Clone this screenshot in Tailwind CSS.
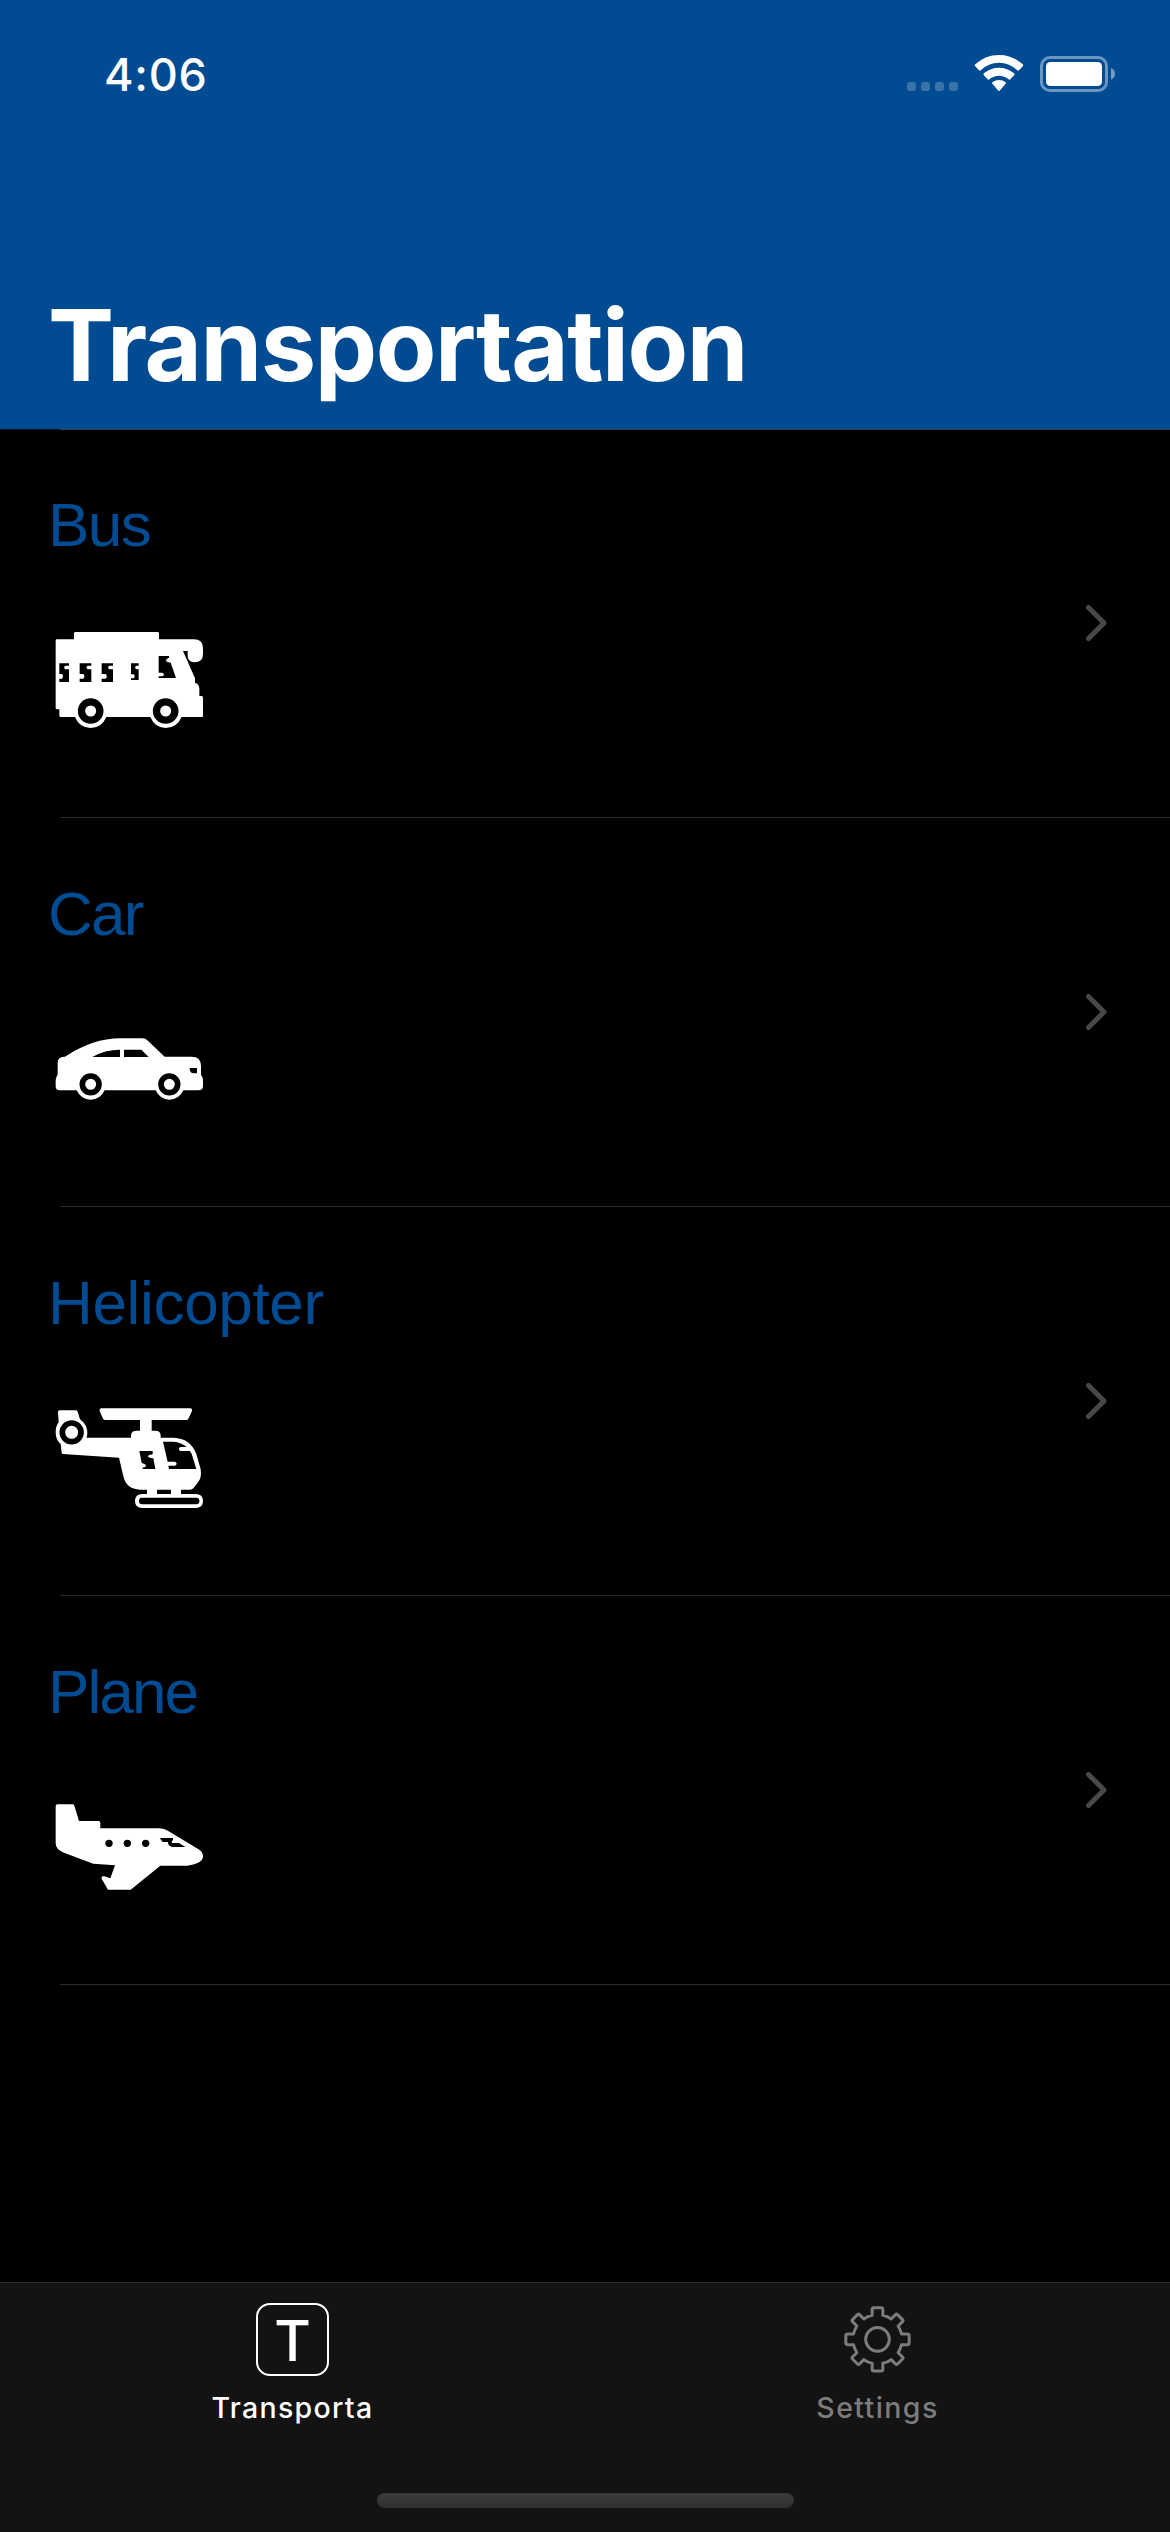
<!DOCTYPE html>
<html lang="en">
<head>
<meta charset="utf-8">
<title>Transportation</title>
<script src="https://cdn.jsdelivr.net/npm/@tailwindcss/browser@4"></script>
</head>
<body class="bg-black">
<div class="flex h-[2532px] w-[1170px] flex-col overflow-hidden bg-black font-['Inter',sans-serif] text-white">
  <header class="flex h-[429px] shrink-0 flex-col justify-between bg-[#004b91] pb-6">
    <div class="flex justify-between pt-[30px] pr-[30px] pl-[104px]">
      <span class="pt-[17px] text-[45px] leading-[55px] font-[550] tracking-[0.8px]">4:06</span>
      <svg class="h-[90px] w-[260px]" viewBox="0 0 780 270" fill="#fff">
        <g fill-opacity=".22">
          <rect x="81" y="156" width="27" height="27" rx="8"/><rect x="123" y="156" width="27" height="27" rx="8"/><rect x="165" y="156" width="27" height="27" rx="8"/><rect x="207" y="156" width="27" height="27" rx="8"/>
        </g>
        <path d="M285 108Q283 105 286 103Q316 75 357 75Q398 75 428 103Q431 105 429 108L417 121Q415 123 412 121Q389 98 357 98Q325 98 302 121Q299 123 297 121Z"/>
        <path d="M311 135Q309 132 312 130Q331 113 357 113Q383 113 402 130Q405 132 403 135L391 148Q389 151 386 148Q373 137 357 137Q341 137 328 148Q325 151 323 148Z"/>
        <path d="M337 161Q335 158 338 156Q346 150 357 150Q368 150 376 156Q379 158 377 161L359 182Q357 184 355 182Z"/>
        <rect x="484.500" y="82.500" width="195" height="99" rx="25" fill="none" stroke="#fff" stroke-opacity=".42" stroke-width="9"/>
        <rect x="498" y="96" width="168" height="72" rx="13"/>
        <path d="M693 114Q705 119 705 131.500Q705 144 693 149Z" fill-opacity=".45"/>
      </svg>
    </div>
    <h1 class="pl-12 text-[99px] leading-[120px] font-bold tracking-[-1.43px]">Transportation</h1>
  </header>

  <main class="relative flex grow flex-col">
    <div class="absolute top-0 right-0 left-0 h-px bg-[#121416]"></div>
    <div class="absolute top-0 right-0 left-[60px] h-px bg-[#3c3e40]"></div>

    <section class="flex h-[389px] shrink-0 flex-col">
      <div class="flex grow items-center justify-between pr-[63px]">
        <div class="h-full pt-[61px]">
          <h2 class="pl-12 font-['Liberation_Sans',Arial,sans-serif] text-[62px] leading-[69px] tracking-[-1.5px] text-[#004b91]">Bus</h2>
          <svg class="mt-[51px] ml-[30px] h-[140px] w-[200px]" viewBox="0 0 600 420">
            <path fill="#fff" d="M77 92Q77 88 81 88H132V70Q132 66 136 66H383Q387 66 387 70V88H492Q519 88 519 115V132Q519 157 494 157Q471 157 473 132V123H459L495 205V219Q507 221 508 235V258H515Q519 258 519 263V317Q519 321 515 321H455Q440 354 407 354Q375 354 361 321H229Q215 354 182 354Q149 354 135 321H92Q88 321 88 317V298H81Q77 298 77 294Z"/>
            <circle cx="182" cy="303" r="27.500" fill="#fff" stroke="#000" stroke-width="22"/>
            <circle cx="407" cy="303" r="27.500" fill="#fff" stroke="#000" stroke-width="22"/>
            <path d="M88 160H117V167H106Q99 172 106 178H117V216H88V206H96Q102 199 96 192H88ZM149 160H184V167H173Q166 172 173 178H184V216H149V206H160Q167 199 160 192H149ZM215 160H249V167H238Q231 172 238 178H249V216H215V206H227Q234 199 227 192H215ZM303 160H326V167H319Q312 172 319 178H326V210H303V205H311Q317 199 311 193H303ZM386 138H417V143Q403 148 411 156L422 158L438 204H386V199H397Q407 194 397 188H386Z"/>
          </svg>
        </div>
        <svg class="h-9 w-[21px]" viewBox="0 0 21 36" fill="none" stroke="#48484b" stroke-width="5" stroke-linecap="round" stroke-linejoin="round"><path d="M2.500 2.500 18 18 2.500 33.500"/></svg>
      </div>
      <div class="ml-[60px] h-px shrink-0 bg-[#2c2c2e]"></div>
    </section>

    <section class="flex h-[389px] shrink-0 flex-col">
      <div class="flex grow items-center justify-between pr-[63px]">
        <div class="h-full pt-[61px]">
          <h2 class="pl-12 font-['Liberation_Sans',Arial,sans-serif] text-[62px] leading-[69px] tracking-[-1.7px] text-[#004b91]">Car</h2>
          <svg class="mt-[51px] ml-[30px] h-[140px] w-[200px]" viewBox="0 -33 600 420">
            <path fill="#fff" d="M83 157Q83 140 105 140Q190 85 270 85H338Q346 85 352 91L404 140H485Q513 140 513 168V194Q519 202 519 212V228Q519 241 505 241H460Q447 269 418 269Q390 269 377 241H224Q211 269 182 269Q153 269 140 241H89Q77 241 77 229V211Q77 201 83 194Z"/>
            <path d="M187 141Q224 119 270 119V141ZM282 119H334L356 141H282ZM479 174H501V190H491Q479 190 479 174Z"/>
            <circle cx="182" cy="223" r="25" fill="#fff" stroke="#000" stroke-width="17"/>
            <circle cx="418" cy="223" r="25" fill="#fff" stroke="#000" stroke-width="17"/>
          </svg>
        </div>
        <svg class="h-9 w-[21px]" viewBox="0 0 21 36" fill="none" stroke="#48484b" stroke-width="5" stroke-linecap="round" stroke-linejoin="round"><path d="M2.500 2.500 18 18 2.500 33.500"/></svg>
      </div>
      <div class="ml-[60px] h-px shrink-0 bg-[#2c2c2e]"></div>
    </section>

    <section class="flex h-[389px] shrink-0 flex-col">
      <div class="flex grow items-center justify-between pr-[63px]">
        <div class="h-full pt-[61px]">
          <h2 class="pl-12 font-['Liberation_Sans',Arial,sans-serif] text-[62px] leading-[69px] tracking-[-0.33px] text-[#004b91]">Helicopter</h2>
          <svg class="mt-[51px] ml-[30px] h-[140px] w-[200px]" viewBox="0 -6 600 420">
            <path fill="#fff" d="M84 66Q84 61 89 61H137Q142 61 143 65L150 88Q173 104 172 132L170 143H303V137Q303 122 320 122H330V90H226Q222 90 219 86L209 63Q208 55 214 55H480Q488 55 486 63L475 86Q473 90 469 90H365V122H376Q392 122 392 137V143H430Q482 145 499 192L512 238Q516 262 504 277L490 295Q486 299 480 299H453V312H497Q519 312 519 333Q519 354 497 354H337Q315 354 315 333Q315 312 337 312H351V299H330Q288 297 280 258L267 203L99 192Q95 192 95 188L92 162Q77 150 77 127Q77 108 86 97Z"/>
            <circle cx="125" cy="127" r="28" fill="#fff" stroke="#000" stroke-width="17"/>
            <path d="M399 155H430Q455 157 470 171H451Q442 177 451 183H480Q485 190 488 201L499 237H417L415 227H435Q445 221 435 215H413ZM328 183H368V193Q354 195 354 199Q354 204 370 205L376 237H338V233Q349 231 348 226Q346 221 335 219ZM381 299H423V312H381Z"/>
            <rect x="327" y="323" width="181" height="20" rx="9"/>
          </svg>
        </div>
        <svg class="h-9 w-[21px]" viewBox="0 0 21 36" fill="none" stroke="#48484b" stroke-width="5" stroke-linecap="round" stroke-linejoin="round"><path d="M2.500 2.500 18 18 2.500 33.500"/></svg>
      </div>
      <div class="ml-[60px] h-px shrink-0 bg-[#2c2c2e]"></div>
    </section>

    <section class="flex h-[389px] shrink-0 flex-col">
      <div class="flex grow items-center justify-between pr-[63px]">
        <div class="h-full pt-[61px]">
          <h2 class="pl-12 font-['Liberation_Sans',Arial,sans-serif] text-[62px] leading-[69px] tracking-[-1.9px] text-[#004b91]">Plane</h2>
          <svg class="mt-[51px] ml-[30px] h-[140px] w-[200px]" viewBox="0 -9 600 420">
            <path fill="#fff" d="M77 79Q77 73 83 73H128Q132 73 133 77L147 123H206Q211 123 211 128V145H387Q403 145 416 154L503 206Q519 214 519 229Q519 251 472 257H391L302 329H234L215 296Q213 287 223 289L241 295L255 256L190 251L102 218Q77 209 77 190Z"/>
            <circle cx="237" cy="190" r="11"/><circle cx="292" cy="190" r="11"/><circle cx="347" cy="190" r="11"/>
            <path d="M389 174H429V180Q423 184 426 189H447L466 201H430Q413 200 414 186H398Z"/>
          </svg>
        </div>
        <svg class="h-9 w-[21px]" viewBox="0 0 21 36" fill="none" stroke="#48484b" stroke-width="5" stroke-linecap="round" stroke-linejoin="round"><path d="M2.500 2.500 18 18 2.500 33.500"/></svg>
      </div>
      <div class="ml-[60px] h-px shrink-0 bg-[#2c2c2e]"></div>
    </section>
  </main>

  <nav class="flex h-[250px] shrink-0 flex-col border-t border-[#2a2a2a] bg-[#131313]">
    <div class="grid h-[210px] shrink-0 grid-cols-2">
      <div class="flex flex-col items-center pt-5">
        <div class="flex h-[73px] w-[73px] items-center justify-center rounded-[14px] border-[2.5px] border-white pt-[2px] text-[56px] leading-[68px] font-medium">T</div>
        <span class="mt-[14px] text-[28.5px] leading-[35px] font-medium tracking-[1.3px]">Transporta</span>
      </div>
      <div class="flex flex-col items-center pt-5 text-[#7c7c7c]">
        <svg class="h-[73px] w-[73px]" viewBox="-109.500 -109 219 219" fill="none" stroke="currentColor" stroke-width="9" stroke-linejoin="round">
          <circle r="35.500"/>
          <path d="M-16 -72V-90Q-16 -95 -11 -95H11Q16 -95 16 -90V-72Q30 -69 41 -61L54 -74Q57 -77 60 -74L75 -59Q78 -56 75 -53L62 -40Q69 -28 72 -16H89Q95 -16 95 -11V11Q95 16 89 16H72Q69 29 62 40L75 53Q78 56 75 59L60 74Q57 77 54 74L41 61Q30 69 16 72V90Q16 95 11 95H-11Q-16 95 -16 90V72Q-30 69 -41 61L-54 74Q-57 77 -60 74L-75 59Q-78 56 -75 53L-62 40Q-69 29 -72 16H-89Q-95 16 -95 11V-11Q-95 -16 -89 -16H-72Q-69 -28 -62 -40L-75 -53Q-78 -56 -75 -59L-60 -74Q-57 -77 -54 -74L-41 -61Q-30 -69 -16 -72Z"/>
        </svg>
        <span class="mt-[14px] text-[28.5px] leading-[35px] font-medium tracking-[1.4px]">Settings</span>
      </div>
    </div>
    <div class="mx-auto h-[15px] w-[417px] rounded-full bg-linear-to-b from-[#3b3b3b] to-[#2f2f2f]"></div>
  </nav>
</div>
</body>
</html>
